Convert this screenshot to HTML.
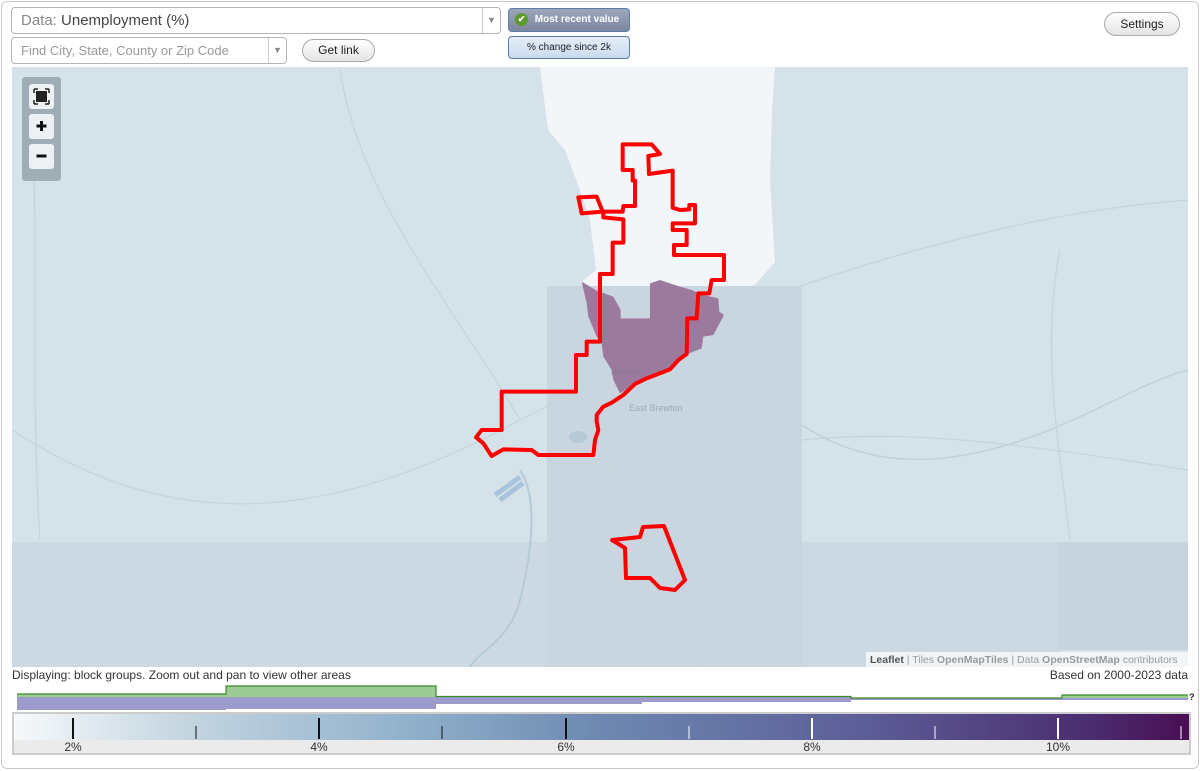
<!DOCTYPE html>
<html><head><meta charset="utf-8"><style>
*{box-sizing:border-box;margin:0;padding:0}
body{width:1200px;height:771px;background:#fff;font-family:"Liberation Sans",Arial,sans-serif;position:relative;overflow:hidden;color:#333}
.frame{position:absolute;left:1px;top:1px;width:1198px;height:768px;border:1px solid #c8c8c8;border-radius:6px}
.sel{position:absolute;border:1px solid #b5b5b5;border-radius:4px;background:#fff;color:#999}
.sel .arr{position:absolute;right:0;top:0;bottom:0;width:18px;border-left:1px solid #ccc;color:#888;font-size:9px;text-align:center}
.btn{position:absolute;border:1px solid #a9a9a9;border-radius:12px;background:linear-gradient(#fff,#e4e4e4);font-size:12px;text-align:center;color:#222}
.tog{position:absolute;border:1px solid #5b7ea8;border-radius:4px;font-size:10px;text-align:center}
</style></head><body>
<div class="frame"></div>
<div class="sel" style="left:11px;top:7px;width:490px;height:27px;font-size:15px;line-height:25px;padding-left:9px"><span style="color:#888">Data:</span> <span style="color:#444">Unemployment (%)</span><div class="arr" style="line-height:25px">▼</div></div>
<div class="sel" style="left:11px;top:37px;width:276px;height:27px;font-size:13px;line-height:25px;padding-left:9px;color:#999">Find City, State, County or Zip Code<div class="arr" style="line-height:25px">▼</div></div>
<div class="btn" style="left:302px;top:39px;width:73px;height:23px;line-height:21px">Get link</div>
<div class="tog" style="left:508px;top:8px;width:122px;height:24px;background:linear-gradient(#9ba5bb,#7d879f);color:#fff;font-weight:bold;line-height:22px;padding-left:16px"><span style="position:absolute;left:6px;top:4px;width:13px;height:13px;border-radius:50%;background:#5c9a2c;color:#fff;font-size:9px;line-height:13px">✔</span>Most recent value</div>
<div class="tog" style="left:508px;top:36px;width:122px;height:23px;background:linear-gradient(#e5eef9,#c9daee);color:#222;line-height:21px">% change since 2k</div>
<div class="btn" style="left:1104px;top:12px;width:76px;height:24px;line-height:22px">Settings</div>

<svg style="position:absolute;left:12px;top:67px" width="1176" height="600" viewBox="12 67 1176 600">
<rect x="12" y="67" width="1176" height="600" fill="#d5e2ea"/>
<polygon points="540,67 775,67 772,110 770,180 775,262 755,285 735,290 595,290 580,283 596,270 590,220 580,190 565,150 548,130" fill="#f3f6f8"/>
<rect x="547" y="286" width="255" height="381" fill="#c9d6df"/>
<rect x="12" y="542" width="535" height="125" fill="#ccd9e2"/>
<rect x="802" y="542" width="256" height="125" fill="#ccd9e2"/>
<rect x="1058" y="542" width="130" height="108" fill="#c7d4dd"/>
<g fill="none" stroke="#c4d3dd" stroke-width="1.2">
<path d="M30 90 C40 200 30 400 40 540"/><path d="M340 70 C360 200 450 300 520 420"/><path d="M12 430 C150 520 300 540 520 420 L760 300 C900 250 1050 210 1188 200"/>
<path d="M600 410 C640 520 620 600 700 667"/><path d="M802 440 C900 430 1000 440 1188 470"/><path d="M1060 250 C1040 350 1060 450 1070 540"/>
</g>
<path d="M520 470 C540 500 530 560 520 600 C510 640 480 650 470 667" fill="none" stroke="#b4cad6" stroke-width="2"/>
<path d="M802 425 C870 470 950 470 1050 430 C1120 400 1150 380 1188 370" fill="none" stroke="#bed0db" stroke-width="1.5"/>
<path d="M495 495 L520 477 M500 500 L523 483" stroke="#a8c4dc" stroke-width="5"/>
<ellipse cx="578" cy="437" rx="9" ry="6" fill="#b5c9d6"/>
<polygon transform="translate(450,130) scale(0.33333)" points="395,455 440,482 490,500 512,540 512,565 600,565 600,460 630,450 660,460 690,470 725,480 760,495 805,505 808,545 822,555 790,615 760,620 755,655 712,672 685,690 660,718 590,745 555,762 510,790 490,750 485,720 460,680 455,640 440,620 415,560 410,520" fill="#9b7a9d"/>
<text x="611" y="374" font-size="9" fill="#8a7a95">Brewton</text>
<text x="629" y="411" font-size="9" fill="#9aaab8">East Brewton</text>
<g transform="translate(450,130) scale(0.33333)" fill="none" stroke="#ff0000" stroke-width="12" stroke-linejoin="round">
<polygon points="518,43 605,43 630,72 595,78 597,132 668,122 668,233 690,240 718,238 718,225 735,225 735,280 668,280 668,300 710,300 710,345 672,345 672,375 822,375 822,450 785,450 778,490 745,490 740,565 712,565 710,672 685,690 660,718 590,745 555,762 520,795 485,818 460,830 440,855 440,875 445,900 435,930 430,975 265,975 245,960 160,958 125,978 100,940 78,922 95,900 155,900 155,785 378,785 378,675 410,675 410,635 450,635 450,432 488,432 488,338 520,338 520,268 460,262 460,245 518,245 520,228 555,228 555,152 548,152 548,120 518,120"/>
<polygon points="385,202 440,200 458,245 395,250"/>
</g>
<polygon points="612,540 640,537 643,527 664,526 685,580 675,590 660,588 650,578 626,578 625,548" fill="none" stroke="#ff0000" stroke-width="4" stroke-linejoin="round"/>
<rect x="866" y="652" width="322" height="15" fill="rgba(255,255,255,0.7)"/>
<text x="870" y="663" font-size="10.5" fill="#999"><tspan fill="#555" font-weight="bold">Leaflet</tspan> | Tiles <tspan font-weight="bold">OpenMapTiles</tspan> | Data <tspan font-weight="bold">OpenStreetMap</tspan> contributors</text>
<rect x="22" y="77" width="39" height="104" rx="3" fill="#9fadb6"/>
<rect x="29" y="84" width="25" height="25" rx="3" fill="#eef1f3"/>
<rect x="29" y="114" width="25" height="25" rx="3" fill="#eef1f3"/>
<rect x="29" y="144" width="25" height="25" rx="3" fill="#eef1f3"/>
<rect x="36" y="91" width="11" height="11" fill="#222"/>
<path d="M34 89h4M34 89v4M49 89h-4M49 89v4M34 104h4M34 104v-4M49 104h-4M49 104v-4" stroke="#222" stroke-width="1.5"/>
<path d="M41.5 121v10M36.5 126h10" stroke="#111" stroke-width="3"/>
<path d="M36.5 156h10" stroke="#111" stroke-width="3"/>
</svg>

<div style="position:absolute;left:12px;top:668px;font-size:12px;color:#333">Displaying: block groups. Zoom out and pan to view other areas</div>
<div style="position:absolute;right:12px;top:668px;font-size:12px;color:#333">Based on 2000-2023 data</div>
<svg style="position:absolute;left:0;top:683px" width="1200" height="30">
<rect x="17" y="11" width="209" height="3" fill="#9ccb94"/>
<rect x="226" y="3" width="210" height="11" fill="#9ccb94"/>
<rect x="1062" y="12" width="126" height="3" fill="#9ccb94"/>
<rect x="17" y="14" width="209" height="13" fill="#9c9bcb"/>
<rect x="226" y="14" width="210" height="12" fill="#9c9bcb"/>
<rect x="436" y="14" width="206" height="7" fill="#9c9bcb"/>
<rect x="642" y="14" width="209" height="5" fill="#9c9bcb"/>
<rect x="851" y="15" width="337" height="2" fill="#9c9bcb"/>
<path d="M17 11H226V3H436V13.5H851V15H1062V12H1188" fill="none" stroke="#3a8a2a" stroke-width="1.2"/>
<text x="1189" y="17" font-size="9" font-weight="bold" fill="#222">?</text>
</svg>
<div style="position:absolute;left:12px;top:712px;width:1179px;height:43px;border:2px solid #ccc;background:#ebebeb">
<div style="position:absolute;left:0;top:0;right:0;height:26px;background:linear-gradient(90deg,#f6f9fb,#c3d4e0 15%,#92b2cc 33%,#6d88b0 50%,#5d5e98 72%,#4a2c6e 92%,#4a0d52)"></div>
</div>
<svg style="position:absolute;left:0;top:714px" width="1200" height="40">
<g stroke="#111" stroke-width="2"><path d="M73 4v21M319 4v21M566 4v21"/></g>
<g stroke="#111" stroke-width="1"><path d="M196 12v13M442 12v13"/></g>
<g stroke="#fff" stroke-width="2"><path d="M812 4v21M1058 4v21"/></g>
<g stroke="#fff" stroke-width="1"><path d="M689 12v13M935 12v13M1181 12v13"/></g>
<g font-size="12" fill="#333" text-anchor="middle"><text x="73" y="37">2%</text><text x="319" y="37">4%</text><text x="566" y="37">6%</text><text x="812" y="37">8%</text><text x="1058" y="37">10%</text></g>
</svg>
</body></html>
